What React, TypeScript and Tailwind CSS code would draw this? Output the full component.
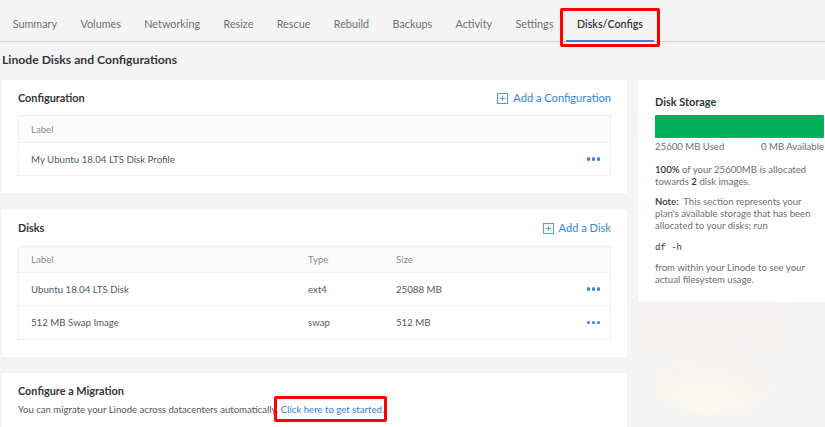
import React from "react";

const tabs = ["Summary", "Volumes", "Networking", "Resize", "Rescue", "Rebuild", "Backups", "Activity", "Settings"];

function PlusBox() {
  return (
    <svg width="11" height="11" viewBox="0 0 11 11" className="shrink-0">
      <rect x="0.5" y="0.5" width="10" height="10" fill="none" stroke="#5a9be6" strokeWidth="1" />
      <path d="M5.5 2.8v5.4M2.8 5.5h5.4" stroke="#5a9be6" strokeWidth="1" />
    </svg>
  );
}

function Dots() {
  return (
    <div className="flex items-center gap-[1.5px] pr-[10px]">
      <span className="w-[3.5px] h-[3.5px] rounded-full bg-[#3683dc]" />
      <span className="w-[3.5px] h-[3.5px] rounded-full bg-[#3683dc]" />
      <span className="w-[3.5px] h-[3.5px] rounded-full bg-[#3683dc]" />
    </div>
  );
}

function AddLink({ label }: { label: string }) {
  return (
    <div className="flex items-center gap-[5px] text-[#3683dc] text-[11.1px]">
      <PlusBox />
      <span>{label}</span>
    </div>
  );
}

export default function App() {
  return (
    <div className="relative w-[825px] h-[427px] overflow-hidden bg-[#f4f4f4] font-['Lato','Noto_Sans',sans-serif] text-[#32363c]">
      {/* Tab bar */}
      <div className="flex h-[42px] border-b border-[#cfcfcf] pl-[1px]">
        {tabs.map((t) => (
          <div key={t} className="px-[11.7px] pt-[16px] text-[10.8px] text-[#707070]">
            {t}
          </div>
        ))}
        <div className="relative ml-[1px] px-[11px] pt-[16px] text-[10.7px] text-[#32363c] font-semibold">
          <span>Disks/Configs</span>
          <div className="absolute left-0 right-0 bottom-[-1px] h-[2px] bg-[#3683dc]" />
          <div className="absolute left-[-6px] right-[-6px] top-[8px] bottom-[-6px] border-[3px] border-[#f00] rounded-[2px]" />
        </div>
      </div>

      <div className="pl-[2px]">
        <h1 className="h-[38px] pb-[1px] flex items-center text-[12.2px] font-bold text-[#32363c]">
          Linode Disks and Configurations
        </h1>

        <div className="flex gap-[11px] items-start w-[880px]">
          {/* Left column */}
          <div className="w-[625px] shrink-0 flex flex-col gap-[16px]">
            {/* Configuration */}
            <div className="bg-white px-[16px] pt-[10px] pb-[17px]">
              <div className="flex items-center justify-between h-[16px] mb-[9px]">
                <div className="text-[10.9px] font-bold">Configuration</div>
                <AddLink label="Add a Configuration" />
              </div>
              <div className="border border-[#f0f0f0] text-[9.7px]">
                <div className="h-[27px] flex items-center px-[12px] bg-[#fbfbfb] border-b border-[#f0f0f0] text-[#8a8c90]">
                  Label
                </div>
                <div className="h-[32px] flex items-center justify-between px-[12px] pr-0 text-[#54585e]">
                  <span>My Ubuntu 18.04 LTS Disk Profile</span>
                  <Dots />
                </div>
              </div>
            </div>

            {/* Disks */}
            <div className="bg-white px-[16px] pt-[11px] pb-[17px]">
              <div className="flex items-center justify-between h-[16px] mb-[10px]">
                <div className="text-[10.9px] font-bold">Disks</div>
                <AddLink label="Add a Disk" />
              </div>
              <div className="border border-[#f0f0f0] text-[9.7px]">
                <div className="h-[26px] grid grid-cols-[277px_88px_1fr] items-center px-[12px] bg-[#fbfbfb] border-b border-[#f0f0f0] text-[#8a8c90]">
                  <span>Label</span>
                  <span>Type</span>
                  <span>Size</span>
                </div>
                <div className="h-[33px] grid grid-cols-[277px_88px_1fr] items-center pl-[12px] border-b border-[#f0f0f0] text-[#54585e]">
                  <span>Ubuntu 18.04 LTS Disk</span>
                  <span>ext4</span>
                  <div className="flex items-center justify-between">
                    <span>25088 MB</span>
                    <Dots />
                  </div>
                </div>
                <div className="h-[33px] grid grid-cols-[277px_88px_1fr] items-center pl-[12px] text-[#54585e]">
                  <span>512 MB Swap Image</span>
                  <span>swap</span>
                  <div className="flex items-center justify-between">
                    <span>512 MB</span>
                    <Dots />
                  </div>
                </div>
              </div>
            </div>

            {/* Migration */}
            <div className="bg-white px-[16px] pt-[10px] h-[80px]">
              <div className="text-[10.9px] font-bold leading-[16px]">Configure a Migration</div>
              <div className="mt-[3px] text-[9.6px] text-[#54585e] leading-[16px]">
                You can migrate your Linode across datacenters automatically.{" "}
                <span className="relative text-[#3683dc]">
                  Click here to get started.
                  <span className="absolute left-[-7px] right-[-3px] top-[-8px] bottom-[-7px] border-[3px] border-[#f00] rounded-[2px]" />
                </span>
              </div>
            </div>
          </div>

          {/* Right column */}
          <div className="w-[202px] shrink-0 bg-white pl-[17px] pr-[16px] pt-[14px] pb-[16px]">
            <div className="text-[10.9px] font-bold leading-[16px]">Disk Storage</div>
            <div className="mt-[5px] h-[23px] bg-[#00b159] rounded-[1px]" />
            <div className="mt-[1px] flex justify-between text-[9.6px] text-[#6b6e72] leading-[16px]">
              <span>25600 MB Used</span>
              <span>0 MB Available</span>
            </div>
            <p className="mt-[9px] text-[9.6px] leading-[12px] text-[#6b6e72]">
              <b className="text-[#32363c] font-semibold">100%</b> of your 25600MB is allocated towards{" "}
              <b className="text-[#32363c] font-semibold">2</b> disk images.
            </p>
            <p className="mt-[8px] text-[9.6px] leading-[12px] text-[#6b6e72] w-[160px]">
              <span className="text-[#32363c] font-semibold">Note:</span>&nbsp; This section represents your plan's available storage that has been allocated to your disks; run
            </p>
            <div className="mt-[9px] text-[9px] leading-[14px] font-['Liberation_Mono',monospace] text-[#32363c]">df -h</div>
            <p className="mt-[7px] text-[9.6px] leading-[12px] text-[#6b6e72] w-[160px]">
              from within your Linode to see your actual filesystem usage.
            </p>
          </div>
        </div>
      </div>

      {/* faint glow artifact */}
      <div className="absolute left-[636px] top-[304px] w-[150px] h-[52px] bg-[#f5f2f2] blur-[3px]" />
      <div className="absolute left-[652px] top-[352px] w-[128px] h-[62px] rounded-[45%] bg-[radial-gradient(ellipse_at_40%_90%,#fcf8ee_0%,#f7f3f0_55%,#f4f4f4_100%)] blur-[4px]" />
    </div>
  );
}
